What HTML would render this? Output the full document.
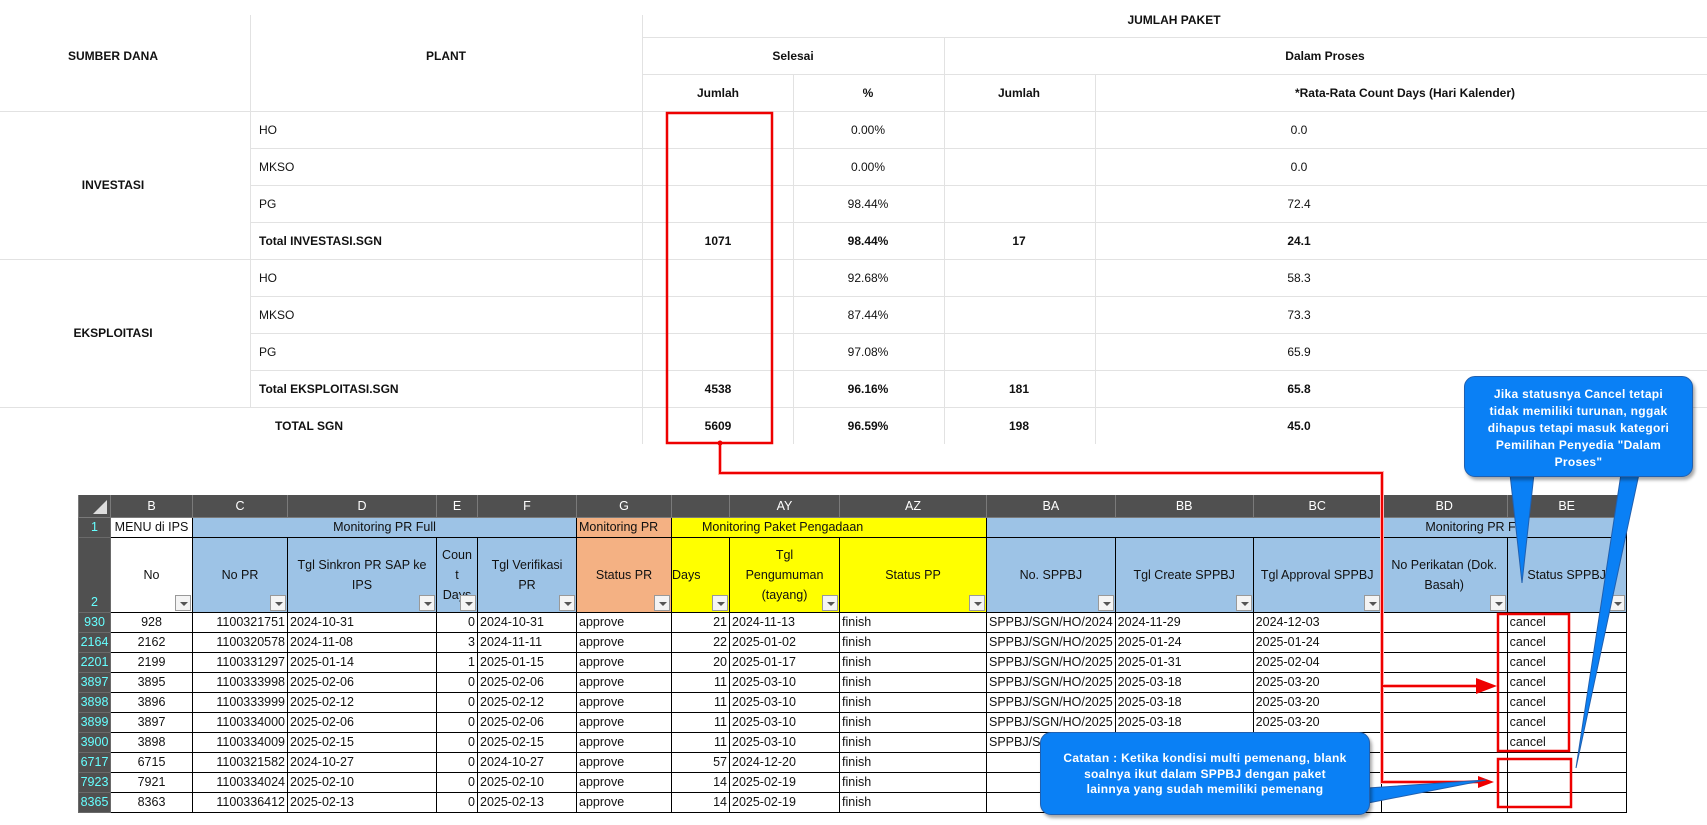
<!DOCTYPE html>
<html><head><meta charset="utf-8"><style>
*{margin:0;padding:0;box-sizing:border-box}
body{width:1707px;height:825px;background:#fff;position:relative;overflow:hidden;font-family:"Liberation Sans",Arial,sans-serif;color:#111}
.a{position:absolute}
.t{position:absolute;font-size:12px;white-space:nowrap;transform:translate(-50%,-50%)}
.l{position:absolute;font-size:12px;white-space:nowrap;transform:translateY(-50%)}
.b{font-weight:bold}
.hl{position:absolute;height:1px;background:#e2e2e2}
.vl{position:absolute;width:1px;background:#e2e2e2}
table{position:absolute;left:78px;top:495px;border-collapse:collapse;table-layout:fixed;font-size:12.5px}
td{border:1px solid #000;height:20px;padding:0 2px;white-space:nowrap;overflow:hidden;line-height:18px}
tr.ch td{background:#505050;color:#fff;text-align:center;height:22px;border:1px solid #7a7a7a;border-top:none}
td.rn{background:#505050;color:#6ff;text-align:center;border-color:#6a6a6a;padding:0}
tr.r1 td{height:20px;text-align:center}
tr.r2 td{height:75px;text-align:center;position:relative;white-space:normal;line-height:20px}
.bl{background:#9dc3e6}.or{background:#f4b183}.ye{background:#ffff00}
.r{text-align:right}.c{text-align:center}
.f{position:absolute;right:1px;bottom:1px;width:16px;height:16px;border:1px solid #999;background:#f4f4f4}
.f:after{content:"";position:absolute;left:4px;top:6px;border-left:4px solid transparent;border-right:4px solid transparent;border-top:4px solid #555}
.call{position:absolute;background:#0a80f5;border:1px solid #2060b0;border-radius:11px;color:#fff;font-weight:bold;font-size:12px;text-align:center;box-shadow:2px 3px 3px rgba(0,0,0,.35);letter-spacing:.3px}
</style></head><body>

<div class="vl" style="left:250px;top:15px;height:392px"></div>
<div class="vl" style="left:642px;top:15px;height:429px"></div>
<div class="hl" style="left:642px;top:37px;width:1065px"></div>
<div class="hl" style="left:642px;top:74px;width:1065px"></div>
<div class="vl" style="left:944px;top:37px;height:407px"></div>
<div class="vl" style="left:793px;top:74px;height:370px"></div>
<div class="vl" style="left:1095px;top:74px;height:370px"></div>
<div class="hl" style="left:0;top:111px;width:1707px"></div>
<div class="hl" style="left:250px;top:148px;width:1457px"></div>
<div class="hl" style="left:250px;top:185px;width:1457px"></div>
<div class="hl" style="left:250px;top:222px;width:1457px"></div>
<div class="hl" style="left:0;top:259px;width:1707px"></div>
<div class="hl" style="left:250px;top:296px;width:1457px"></div>
<div class="hl" style="left:250px;top:333px;width:1457px"></div>
<div class="hl" style="left:250px;top:370px;width:1457px"></div>
<div class="hl" style="left:0;top:407px;width:1707px"></div>

<div class="t b" style="left:113px;top:56px">SUMBER DANA</div>
<div class="t b" style="left:446px;top:56px">PLANT</div>
<div class="t b" style="left:1174px;top:20px">JUMLAH PAKET</div>
<div class="t b" style="left:793px;top:56px">Selesai</div>
<div class="t b" style="left:1325px;top:56px">Dalam Proses</div>
<div class="t b" style="left:718px;top:93px">Jumlah</div>
<div class="t b" style="left:868px;top:93px">%</div>
<div class="t b" style="left:1019px;top:93px">Jumlah</div>
<div class="t b" style="left:1405px;top:93px">*Rata-Rata Count Days (Hari Kalender)</div>

<div class="t b" style="left:113px;top:185px">INVESTASI</div>
<div class="t b" style="left:113px;top:333px">EKSPLOITASI</div>
<div class="t b" style="left:309px;top:426px">TOTAL SGN</div>

<div class="l" style="left:259px;top:130px">HO</div>
<div class="l" style="left:259px;top:167px">MKSO</div>
<div class="l" style="left:259px;top:204px">PG</div>
<div class="l b" style="left:259px;top:241px">Total INVESTASI.SGN</div>
<div class="l" style="left:259px;top:278px">HO</div>
<div class="l" style="left:259px;top:315px">MKSO</div>
<div class="l" style="left:259px;top:352px">PG</div>
<div class="l b" style="left:259px;top:389px">Total EKSPLOITASI.SGN</div>

<div class="t b" style="left:718px;top:241px">1071</div>
<div class="t b" style="left:718px;top:389px">4538</div>
<div class="t b" style="left:718px;top:426px">5609</div>

<div class="t" style="left:868px;top:130px">0.00%</div>
<div class="t" style="left:868px;top:167px">0.00%</div>
<div class="t" style="left:868px;top:204px">98.44%</div>
<div class="t b" style="left:868px;top:241px">98.44%</div>
<div class="t" style="left:868px;top:278px">92.68%</div>
<div class="t" style="left:868px;top:315px">87.44%</div>
<div class="t" style="left:868px;top:352px">97.08%</div>
<div class="t b" style="left:868px;top:389px">96.16%</div>
<div class="t b" style="left:868px;top:426px">96.59%</div>

<div class="t b" style="left:1019px;top:241px">17</div>
<div class="t b" style="left:1019px;top:389px">181</div>
<div class="t b" style="left:1019px;top:426px">198</div>

<div class="t" style="left:1299px;top:130px">0.0</div>
<div class="t" style="left:1299px;top:167px">0.0</div>
<div class="t" style="left:1299px;top:204px">72.4</div>
<div class="t b" style="left:1299px;top:241px">24.1</div>
<div class="t" style="left:1299px;top:278px">58.3</div>
<div class="t" style="left:1299px;top:315px">73.3</div>
<div class="t" style="left:1299px;top:352px">65.9</div>
<div class="t b" style="left:1299px;top:389px">65.8</div>
<div class="t b" style="left:1299px;top:426px">45.0</div>

<table>
<colgroup><col style="width:32px"><col style="width:82px"><col style="width:95px"><col style="width:149px"><col style="width:41px"><col style="width:99px"><col style="width:95px"><col style="width:58px"><col style="width:110px"><col style="width:147px"><col style="width:128px"><col style="width:138px"><col style="width:128px"><col style="width:126px"><col style="width:119px"></colgroup>
<tr class="ch"><td style="position:relative"><div style="position:absolute;right:3px;bottom:3px;border-left:14px solid transparent;border-bottom:14px solid #ddd"></div></td><td>B</td><td>C</td><td>D</td><td>E</td><td>F</td><td>G</td><td></td><td>AY</td><td>AZ</td><td>BA</td><td>BB</td><td>BC</td><td>BD</td><td>BE</td></tr>
<tr class="r1"><td class="rn">1</td><td>MENU di IPS</td><td class="bl" colspan="4">Monitoring PR Full</td><td class="or" style="text-align:left">Monitoring PR</td><td class="ye" colspan="3" style="text-align:left;padding-left:30px">Monitoring Paket Pengadaan</td><td class="bl" colspan="5" style="text-align:right;padding-right:110px">Monitoring PR F</td></tr>
<tr class="r2"><td class="rn" style="vertical-align:bottom">2</td><td>No<div class="f"></div></td><td class="bl">No PR<div class="f"></div></td><td class="bl">Tgl Sinkron PR SAP ke IPS<div class="f"></div></td><td class="bl" style="padding:0;line-height:20px">Coun<br>t<br>Days<div class="f"></div></td><td class="bl">Tgl Verifikasi<br>PR<div class="f"></div></td><td class="or">Status PR<div class="f"></div></td><td class="ye" style="text-align:left;padding:0">Days<div class="f"></div></td><td class="ye">Tgl<br>Pengumuman<br>(tayang)<div class="f"></div></td><td class="ye">Status PP<div class="f"></div></td><td class="bl">No. SPPBJ<div class="f"></div></td><td class="bl">Tgl Create SPPBJ<div class="f"></div></td><td class="bl">Tgl Approval SPPBJ<div class="f"></div></td><td class="bl">No Perikatan (Dok. Basah)<div class="f"></div></td><td class="bl">Status SPPBJ<div class="f"></div></td></tr>
<tr><td class="rn">930</td><td class="c">928</td><td class="r">1100321751</td><td>2024-10-31</td><td class="r">0</td><td>2024-10-31</td><td>approve</td><td class="r">21</td><td>2024-11-13</td><td>finish</td><td>SPPBJ/SGN/HO/2024</td><td>2024-11-29</td><td>2024-12-03</td><td></td><td>cancel</td></tr>
<tr><td class="rn">2164</td><td class="c">2162</td><td class="r">1100320578</td><td>2024-11-08</td><td class="r">3</td><td>2024-11-11</td><td>approve</td><td class="r">22</td><td>2025-01-02</td><td>finish</td><td>SPPBJ/SGN/HO/2025</td><td>2025-01-24</td><td>2025-01-24</td><td></td><td>cancel</td></tr>
<tr><td class="rn">2201</td><td class="c">2199</td><td class="r">1100331297</td><td>2025-01-14</td><td class="r">1</td><td>2025-01-15</td><td>approve</td><td class="r">20</td><td>2025-01-17</td><td>finish</td><td>SPPBJ/SGN/HO/2025</td><td>2025-01-31</td><td>2025-02-04</td><td></td><td>cancel</td></tr>
<tr><td class="rn">3897</td><td class="c">3895</td><td class="r">1100333998</td><td>2025-02-06</td><td class="r">0</td><td>2025-02-06</td><td>approve</td><td class="r">11</td><td>2025-03-10</td><td>finish</td><td>SPPBJ/SGN/HO/2025</td><td>2025-03-18</td><td>2025-03-20</td><td></td><td>cancel</td></tr>
<tr><td class="rn">3898</td><td class="c">3896</td><td class="r">1100333999</td><td>2025-02-12</td><td class="r">0</td><td>2025-02-12</td><td>approve</td><td class="r">11</td><td>2025-03-10</td><td>finish</td><td>SPPBJ/SGN/HO/2025</td><td>2025-03-18</td><td>2025-03-20</td><td></td><td>cancel</td></tr>
<tr><td class="rn">3899</td><td class="c">3897</td><td class="r">1100334000</td><td>2025-02-06</td><td class="r">0</td><td>2025-02-06</td><td>approve</td><td class="r">11</td><td>2025-03-10</td><td>finish</td><td>SPPBJ/SGN/HO/2025</td><td>2025-03-18</td><td>2025-03-20</td><td></td><td>cancel</td></tr>
<tr><td class="rn">3900</td><td class="c">3898</td><td class="r">1100334009</td><td>2025-02-15</td><td class="r">0</td><td>2025-02-15</td><td>approve</td><td class="r">11</td><td>2025-03-10</td><td>finish</td><td>SPPBJ/SGN/HO/2025</td><td></td><td></td><td></td><td>cancel</td></tr>
<tr><td class="rn">6717</td><td class="c">6715</td><td class="r">1100321582</td><td>2024-10-27</td><td class="r">0</td><td>2024-10-27</td><td>approve</td><td class="r">57</td><td>2024-12-20</td><td>finish</td><td></td><td></td><td></td><td></td><td></td></tr>
<tr><td class="rn">7923</td><td class="c">7921</td><td class="r">1100334024</td><td>2025-02-10</td><td class="r">0</td><td>2025-02-10</td><td>approve</td><td class="r">14</td><td>2025-02-19</td><td>finish</td><td></td><td></td><td></td><td></td><td></td></tr>
<tr><td class="rn">8365</td><td class="c">8363</td><td class="r">1100336412</td><td>2025-02-13</td><td class="r">0</td><td>2025-02-13</td><td>approve</td><td class="r">14</td><td>2025-02-19</td><td>finish</td><td></td><td></td><td></td><td></td><td></td></tr>
</table>

<svg class="a" style="left:0;top:0" width="1707" height="825">
<g fill="none" stroke="#ee0000" stroke-width="2.5">
<rect x="667" y="113" width="105" height="330"/>
<rect x="1498" y="614" width="71" height="137"/>
<rect x="1498" y="759" width="73" height="48"/>
</g>
<g fill="none" stroke="#ffb0b0" stroke-width="4"><path d="M720,443 V473 H1382 V782 H1480 M1382,686 H1480"/></g>
<g fill="none" stroke="#ee0000" stroke-width="2"><path d="M720,443 V473 H1382 V782 H1480 M1382,686 H1478"/></g>
<circle cx="720" cy="443" r="2.5" fill="#ee0000"/>
<polygon points="1476,678 1497,686 1476,694" fill="#ee0000"/>
<polygon points="1478,776 1494,782 1478,788" fill="#ee0000"/>
<g fill="#0a80f5" stroke="#2060b0" stroke-width="1">
<polygon points="1510,474 1534,474 1522,583"/>
<polygon points="1621,474 1639,474 1576,768"/>
<polygon points="1368,788 1368,803 1486,780"/>
</g>
</svg>

<div class="call" style="left:1464px;top:376px;width:229px;height:101px;padding-top:9px;line-height:17px">Jika statusnya Cancel tetapi<br>tidak memiliki turunan, nggak<br>dihapus tetapi masuk kategori<br>Pemilihan Penyedia "Dalam<br>Proses"</div>
<div class="call" style="left:1040px;top:732px;width:330px;height:83px;padding-top:18px;line-height:15.5px">Catatan : Ketika kondisi multi pemenang, blank<br>soalnya ikut dalam SPPBJ dengan paket<br>lainnya yang sudah memiliki pemenang</div>

</body></html>
